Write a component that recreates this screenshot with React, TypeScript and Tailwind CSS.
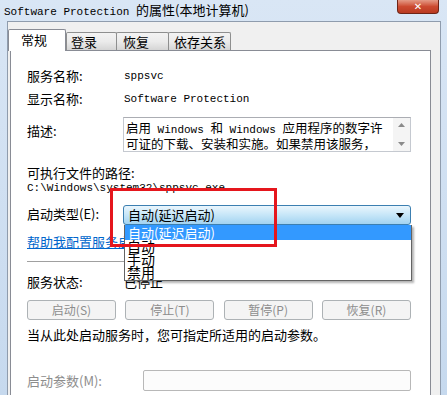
import React from "react";

const M = ({ children }: { children: React.ReactNode }) => (
  <span className="font-['Liberation_Mono',monospace] text-[11px] whitespace-pre">{children}</span>
);

function Tab({ label, active, w, pl, first }: { label: string; active?: boolean; w: number; pl: number; first?: boolean }) {
  if (active) {
    return (
      <div className="relative z-10 -mb-px h-[22px] w-[58px] border border-b-0 border-[#898c95] bg-white pl-[12px] leading-[20px] rounded-t-[2px]">
        {label}
      </div>
    );
  }
  return (
    <div
      style={{ width: w, paddingLeft: pl }}
      className={`${first ? "" : "-ml-px"} h-[18px] border border-b-0 border-[#8e8f8f] bg-gradient-to-b from-[#f3f3f3] via-[#ebebeb] to-[#d5d5d5] leading-[17px] rounded-t-[2px]`}
    >
      {label}
    </div>
  );
}

function Btn({ label }: { label: string }) {
  return (
    <div className="flex h-[20px] w-[89px] items-center justify-center rounded-[3px] border border-[#adb2b5] bg-[#f4f4f4] text-[12px] text-[#8d8d8d]">
      {label}
    </div>
  );
}

export default function App() {
  return (
    <div className="relative flex h-[395px] w-[447px] flex-col overflow-hidden bg-gradient-to-b from-[#d9e6f5] to-[#c6d9ee] font-['Noto_Sans_CJK_SC',sans-serif] text-[13px] text-black">
      {/* title bar */}
      <div className="relative flex h-[21px] shrink-0 items-center pl-[4px] leading-[16px]">
        <span>
          <M>Software Protection </M>的属性(本地计算机)
        </span>
        <div className="absolute right-[8px] top-0 flex h-[14px] w-[42px] items-center justify-center rounded-b-[4px] border border-t-0 border-[#6e2416] bg-gradient-to-b from-[#e49a86] via-[#cc4a30] to-[#b93a22]">
          <span className="font-['DejaVu_Sans',sans-serif] text-[10px] font-bold leading-[10px] text-white">✕</span>
        </div>
      </div>

      {/* body */}
      <div className="ml-[7px] mr-[6px] flex-1 border border-b-0 border-[#8f9cad] bg-[#f0f0f0]">
        {/* tabs */}
        <div className="mt-[7px] flex h-[21px] items-end">
          <Tab label="常规" active w={58} pl={12} />
          <Tab label="登录" w={51} pl={4} first />
          <Tab label="恢复" w={53} pl={6} />
          <Tab label="依存关系" w={63} pl={5} />
        </div>
        {/* panel */}
        <div className="ml-[2px] h-[400px] w-[421px] border border-[#898c95] bg-white pl-[16px] pt-[16px]">
          <div className="flex h-[18px] items-center">
            <div className="w-[97px]">服务名称:</div>
            <M>sppsvc</M>
          </div>
          <div className="mt-[5px] flex h-[18px] items-center">
            <div className="w-[97px]">显示名称:</div>
            <M>Software Protection</M>
          </div>
          <div className="mt-[9px] flex items-start">
            <div className="w-[96px] pt-[5px] leading-[18px]">描述:</div>
            <div className="flex h-[35px] w-[288px] border border-[#c5c9d0] border-t-[#abadb3] bg-white">
              <div className="flex-1 pl-[2px] pt-[3px] text-[12.5px] leading-[13px]">
                <div className="whitespace-nowrap">
                  启用<M> Windows </M>和<M> Windows </M>应用程序的数字许
                </div>
                <div className="whitespace-nowrap">可证的下载、安装和实施。如果禁用该服务，</div>
              </div>
              <div className="flex w-[17px] flex-col items-center justify-between bg-[#f4f4f4] py-[5px]">
                <svg width="7" height="4" viewBox="0 0 7 4"><path d="M0 4 L3.5 0 L7 4 Z" fill="#8a8a8a" /></svg>
                <svg width="7" height="4" viewBox="0 0 7 4"><path d="M0 0 L3.5 4 L7 0 Z" fill="#8a8a8a" /></svg>
              </div>
            </div>
          </div>
          <div className="mt-[14px] h-[14px] leading-[14px]">可执行文件的路径:</div>
          <div className="h-[12px] leading-[12px]">
            <M>C:\Windows\system32\sppsvc.exe</M>
          </div>
          <div className="mt-[13px] flex h-[20px] items-start">
            <div className="w-[96px] pt-[1px] leading-[16px]">启动类型(E):</div>
            <div className="relative flex h-[20px] w-[288px] items-center rounded-[3px] border border-[#3c7fb1] bg-gradient-to-b from-[#eaf6fd] via-[#c6e6f8] to-[#a2d3f1] pl-[4px]">
              自动(延迟启动)
              <svg className="absolute right-[6px] top-[7px]" width="8" height="5" viewBox="0 0 8 5"><path d="M0 0 L8 0 L4 5 Z" fill="#000" /></svg>
            </div>
          </div>
          <div className="mt-[9px] h-[16px] leading-[16px] text-[#0066cc] underline">帮助我配置服务启动选项。</div>
          <div className="mt-[11px] h-px w-[384px] bg-[#a0a0a0]" />
          <div className="mt-[12px] flex h-[16px] items-center">
            <div className="w-[97px]">服务状态:</div>
            <div>已停止</div>
          </div>
          <div className="mt-[10px] flex w-[384px] justify-between">
            <Btn label="启动(S)" />
            <Btn label="停止(T)" />
            <Btn label="暂停(P)" />
            <Btn label="恢复(R)" />
          </div>
          <div className="mt-[7px] h-[16px] leading-[16px]">当从此处启动服务时，您可指定所适用的启动参数。</div>
          <div className="mt-[27px] flex h-[21px] items-center">
            <div className="w-[116px] text-[#8d8d8d]">启动参数(M):</div>
            <div className="h-[21px] w-[268px] rounded-[2px] border border-[#b8b8b8] bg-[#fcfcfc]" />
          </div>
        </div>
      </div>

      {/* dropdown list */}
      <div className="absolute left-[124px] top-[225px] w-[288px] border border-t-0 border-[#646464] bg-white shadow-[2px_2px_2px_rgba(0,0,0,0.3)]">
        <div className="h-[15px] bg-[#3399ff] pl-[3px] leading-[15px] text-white">自动(延迟启动)</div>
        <div className="pl-[2px] text-[14px] leading-[13px]">
          <div>自动</div>
          <div>手动</div>
          <div className="h-[14px]">禁用</div>
        </div>
      </div>

      {/* red highlight box */}
      <div className="pointer-events-none absolute left-[110px] top-[188px] h-[59px] w-[167px] border-[3px] border-[#e5161d]" />
    </div>
  );
}
